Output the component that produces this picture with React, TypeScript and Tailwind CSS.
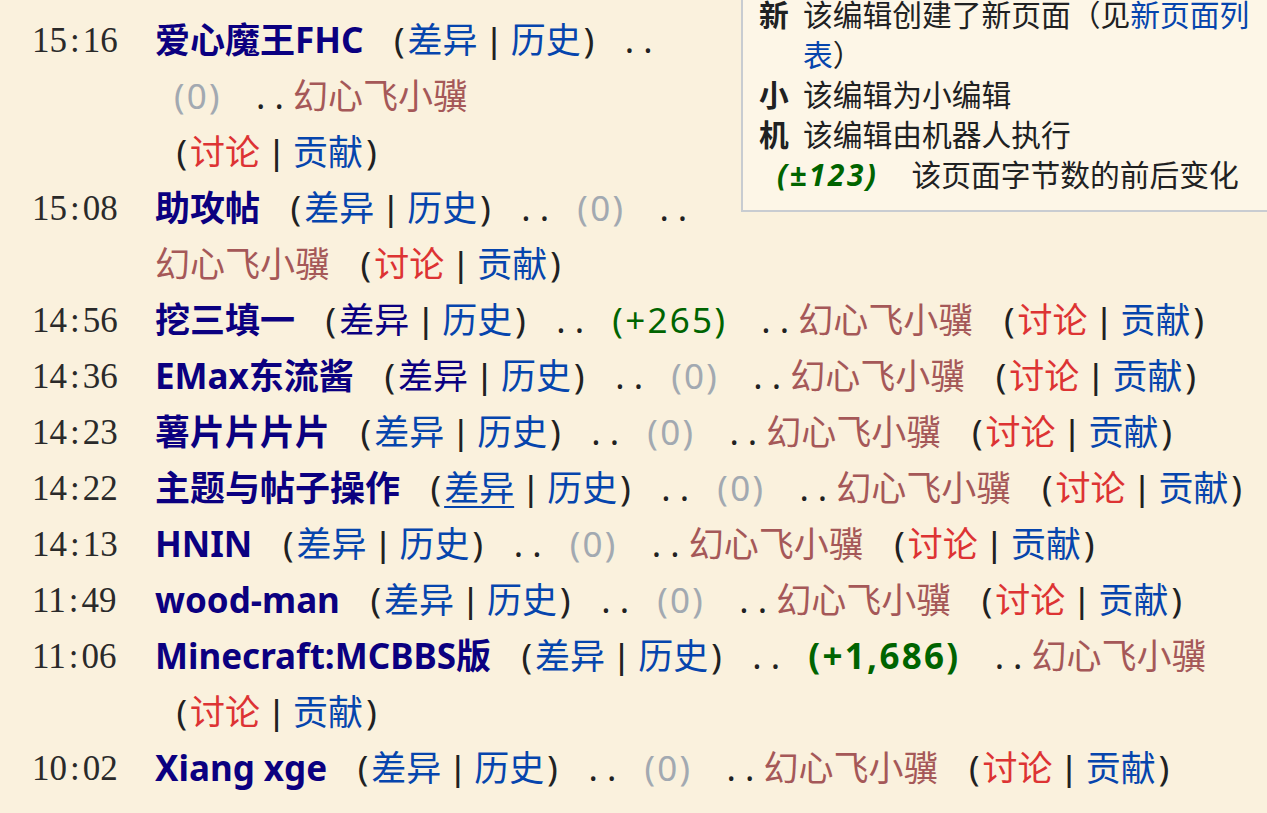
import React from "react";

type RowProps = {
  time: string;
  title: string;
  diff?: "normal" | "visited" | "hover";
  bytes: string;
  bytesKind: "null" | "pos" | "posBig";
};

function Sep() {
  return <span className="whitespace-nowrap text-[#202122]">. .</span>;
}

function Bar() {
  return <span className="mx-[12px] font-['Liberation_Sans',sans-serif] leading-none text-[#202122]">|</span>;
}

function Open() {
  return <span className="inline-block w-[35px] pr-[3px] text-right leading-none">(</span>;
}

function Close() {
  return <span className="inline-block w-[35px] pl-[3px] text-left leading-none">)</span>;
}

function Row({ time, title, diff = "normal", bytes, bytesKind }: RowProps) {
  const [h, m] = time.split(":");
  const diffCls =
    diff === "visited"
      ? "text-[#0b0080]"
      : diff === "hover"
      ? "text-[#0645ad] underline underline-offset-[5px] decoration-[2px]"
      : "text-[#0645ad]";
  const bytesCls =
    bytesKind === "null"
      ? "text-[#a2a9b1]"
      : bytesKind === "pos"
      ? "text-[#006400]"
      : "text-[#006400] font-bold";
  return (
    <div className="flex items-start pl-[32px]">
      <div className="h-[56px] w-[123px] shrink-0 font-['Liberation_Serif',serif] leading-[58px] text-[#2a2a2a]">
        {h}
        <span className="px-[3px]">:</span>
        {m}
      </div>
      <div className="min-w-0 flex-1">
        <a className="font-bold text-[#0b0080]">{title}</a>{" "}
        <span className="whitespace-nowrap">
          <Open />
          <a className={diffCls}>差异</a>
          <Bar />
          <a className="text-[#0645ad]">历史</a>
          <Close />
        </span>{" "}
        <Sep />{" "}
        <span className={`ml-[19px] mr-[25px] whitespace-nowrap tracking-[2.3px] ${bytesCls}`}>{bytes}</span>{" "}
        <Sep />{" "}
        <a className="whitespace-nowrap text-[#a55858]">幻心飞小骥</a>{" "}
        <span className="whitespace-nowrap">
          <Open />
          <a className="text-[#dd3333]">讨论</a>
          <Bar />
          <a className="text-[#0645ad]">贡献</a>
          <Close />
        </span>
      </div>
    </div>
  );
}

export default function App() {
  const rows: RowProps[] = [
    { time: "15:16", title: "爱心魔王FHC", bytes: "(0)", bytesKind: "null" },
    { time: "15:08", title: "助攻帖", bytes: "(0)", bytesKind: "null" },
    { time: "14:56", title: "挖三填一", diff: "visited", bytes: "(+265)", bytesKind: "pos" },
    { time: "14:36", title: "EMax东流酱", diff: "visited", bytes: "(0)", bytesKind: "null" },
    { time: "14:23", title: "薯片片片片", bytes: "(0)", bytesKind: "null" },
    { time: "14:22", title: "主题与帖子操作", diff: "hover", bytes: "(0)", bytesKind: "null" },
    { time: "14:13", title: "HNIN", bytes: "(0)", bytesKind: "null" },
    { time: "11:49", title: "wood-man", bytes: "(0)", bytesKind: "null" },
    { time: "11:06", title: "Minecraft:MCBBS版", bytes: "(+1,686)", bytesKind: "posBig" },
    { time: "10:02", title: "Xiang xge", bytes: "(0)", bytesKind: "null" },
  ];

  return (
    <div className="min-h-screen w-full overflow-hidden bg-[#faf1dd] pt-[12px] font-['Noto_Sans','Noto_Sans_CJK_SC',sans-serif] text-[35px] leading-[56px] text-[#202122]">
      <div className="float-right -mt-[32px] ml-[41px] -mr-[60px] w-[586px] border-2 border-[#c8ccd1] bg-[#fdf6e7] pb-[15px] pl-[16px] pr-[60px] pt-[13px] text-[29.75px] leading-[40px] text-[#202122]">
        <div className="flex">
          <div className="w-[44px] shrink-0 font-bold">新</div>
          <div className="min-w-0 flex-1">
            该编辑创建了新页面（见<a className="text-[#0645ad]">新页面列表</a>）
          </div>
        </div>
        <div className="flex">
          <div className="w-[44px] shrink-0 font-bold">小</div>
          <div className="min-w-0 flex-1">该编辑为小编辑</div>
        </div>
        <div className="flex">
          <div className="w-[44px] shrink-0 font-bold">机</div>
          <div className="min-w-0 flex-1">该编辑由机器人执行</div>
        </div>
        <div className="flex">
          <span className="ml-[18px] font-bold italic tracking-[2.5px] text-[#006400]">(±123)</span>
          <span className="ml-[33px]">该页面字节数的前后变化</span>
        </div>
      </div>
      {rows.map((r) => (
        <Row key={r.time} {...r} />
      ))}
    </div>
  );
}
